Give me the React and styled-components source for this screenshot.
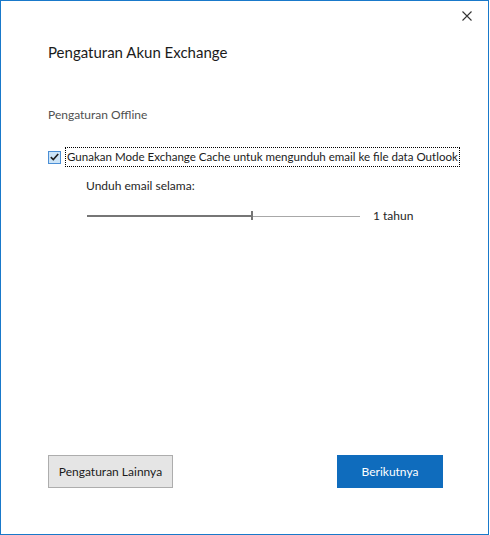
import React, { useState } from 'react';
import styled, { createGlobalStyle } from 'styled-components';

const GlobalStyle = createGlobalStyle`
  html, body {
    margin: 0;
    padding: 0;
    background: #ffffff;
  }
  body {
    font-family: Lato, 'Noto Sans', sans-serif;
  }
`;

const Window = styled.div`
  box-sizing: border-box;
  width: 489px;
  height: 535px;
  border: 1px solid #1979ca;
  background: #ffffff;
  display: flex;
  flex-direction: column;
  padding-bottom: 46px;
`;

const TopBar = styled.div`
  display: flex;
  justify-content: flex-end;
  padding: 10px 16px 0 0;
`;

const CloseButton = styled.button`
  width: 10px;
  height: 10px;
  padding: 0;
  border: none;
  background: transparent;
  display: flex;
  cursor: pointer;
`;

const Content = styled.div`
  display: flex;
  flex-direction: column;
  padding-left: 47px;
`;

const Title = styled.h1`
  margin: 21px 0 0 0;
  font-size: 15px;
  line-height: 20px;
  font-weight: 400;
  color: #1b1b1b;
`;

const SectionLabel = styled.div`
  margin-top: 45px;
  font-size: 12px;
  line-height: 16px;
  color: #505050;
`;

const CheckRow = styled.label`
  margin-top: 24px;
  display: flex;
  align-items: center;
  gap: 4px;
  height: 20px;
  cursor: pointer;
`;

const Box = styled.span`
  box-sizing: border-box;
  width: 13px;
  height: 13px;
  border: 1px solid ${(p) => (p.checked ? '#4b8fd6' : '#333333')};
  background: ${(p) => (p.checked ? '#cce4f7' : '#ffffff')};
  display: flex;
  align-items: center;
  justify-content: center;
`;

const CheckText = styled.span`
  font-size: 11.55px;
  line-height: 16px;
  color: #1b1b1b;
  padding: 1px;
  border: 1px dotted #000000;
  white-space: nowrap;
`;

const Indented = styled.div`
  padding-left: 39px;
  display: flex;
  flex-direction: column;
`;

const SubLabel = styled.div`
  margin-top: 11px;
  margin-left: -1px;
  font-size: 12px;
  line-height: 16px;
  color: #262626;
`;

const SliderRow = styled.div`
  margin-top: 12px;
  height: 20px;
  display: flex;
  align-items: center;
  gap: 13px;
`;

const Track = styled.div`
  position: relative;
  width: 273px;
  height: 20px;
  display: flex;
  align-items: center;
`;

const Filled = styled.div`
  height: 2px;
  background: #767676;
`;

const Rest = styled.div`
  flex: 1;
  height: 1px;
  background: #a8a8a8;
`;

const Thumb = styled.div`
  position: absolute;
  top: 5px;
  width: 2px;
  height: 9px;
  background: #767676;
`;

const SliderValue = styled.span`
  font-size: 12px;
  line-height: 16px;
  color: #262626;
`;

const ButtonRow = styled.div`
  margin-top: auto;
  display: flex;
  justify-content: space-between;
  padding: 0 45px 0 47px;
`;

const Button = styled.button`
  box-sizing: border-box;
  height: 33px;
  width: ${(p) => p.width}px;
  padding: 0;
  white-space: nowrap;
  font-family: Lato, 'Noto Sans', sans-serif;
  font-size: 12px;
  border: 1px solid ${(p) => (p.primary ? '#0f6cbd' : '#adadad')};
  background: ${(p) => (p.primary ? '#0f6cbd' : '#e5e5e5')};
  color: ${(p) => (p.primary ? '#ffffff' : '#1b1b1b')};
  cursor: pointer;
`;

export default function App() {
  const [cached, setCached] = useState(true);
  const months = 12;
  const pct = months / 20;

  return (
    <>
      <GlobalStyle />
      <Window>
        <TopBar>
          <CloseButton aria-label="Tutup">
            <svg width="10" height="10" viewBox="0 0 10 10">
              <path d="M0.5 0.5 L9.5 9.5 M9.5 0.5 L0.5 9.5" stroke="#333" strokeWidth="1.1" />
            </svg>
          </CloseButton>
        </TopBar>
        <Content>
          <Title>Pengaturan Akun Exchange</Title>
          <SectionLabel>Pengaturan Offline</SectionLabel>
          <CheckRow onClick={() => setCached(!cached)}>
            <Box checked={cached}>
              {cached && (
                <svg width="9" height="8" viewBox="0 0 9 8">
                  <path d="M0.8 4.2 L3.3 6.6 L8.2 1" fill="none" stroke="#1f1f1f" strokeWidth="1.6" />
                </svg>
              )}
            </Box>
            <CheckText>Gunakan Mode Exchange Cache untuk mengunduh email ke file data Outlook</CheckText>
          </CheckRow>
          <Indented>
            <SubLabel>Unduh email selama:</SubLabel>
            <SliderRow>
              <Track>
                <Filled style={{ width: `${pct * 100}%` }} />
                <Rest />
                <Thumb style={{ left: `${pct * 100}%` }} />
              </Track>
              <SliderValue>1 tahun</SliderValue>
            </SliderRow>
          </Indented>
        </Content>
        <ButtonRow>
          <Button width={125}>Pengaturan Lainnya</Button>
          <Button width={106} primary>Berikutnya</Button>
        </ButtonRow>
      </Window>
    </>
  );
}
